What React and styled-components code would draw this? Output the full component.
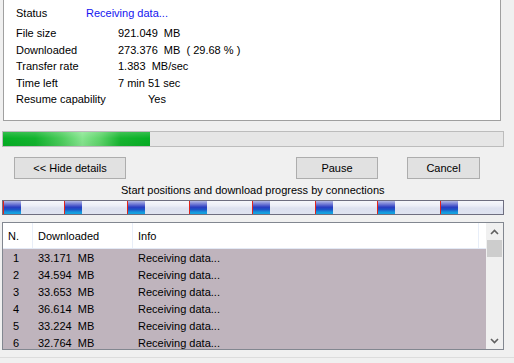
import React from "react";
import styled, { createGlobalStyle } from "styled-components";

const Global = createGlobalStyle`
  html, body { margin: 0; padding: 0; background: #f0f0f0; }
  body { font-family: "Liberation Sans", Arial, sans-serif; font-size: 11px; color: #000; }
`;

const Window = styled.div`
  width: 514px;
  height: 363px;
  overflow: hidden;
  background: #f0f0f0;
  display: flex;
  flex-direction: column;
`;

const InfoPanel = styled.div`
  box-sizing: border-box;
  margin-left: 3px;
  width: 498px;
  height: 121px;
  flex: none;
  background: #fff;
  border: 1px solid #a0a0a0;
  border-top: none;
  padding: 4px 0 0 12px;
`;

const StatusRow = styled.div`
  display: grid;
  grid-template-columns: 70px auto;
  height: 17px;
  align-items: center;
  margin-bottom: 4px;
`;

const DetailRow = styled.div`
  display: grid;
  grid-template-columns: 102px auto;
  height: 16.5px;
  align-items: center;
  white-space: pre;
`;

const Value = styled.span`
  color: ${(p) => (p.$blue ? "#1414f0" : "#000")};
  padding-left: ${(p) => p.$indent || 0}px;
  white-space: pre;
`;

const ProgressTrack = styled.div`
  box-sizing: border-box;
  margin: 10px 0 0 2px;
  width: 502px;
  height: 16px;
  flex: none;
  border: 1px solid #bcbcbc;
  background: #e6e6e6;
  display: flex;
`;

const ProgressFill = styled.div`
  height: 100%;
  background:
    linear-gradient(180deg, rgba(255,255,255,0.18) 0%, rgba(255,255,255,0) 45%, rgba(0,0,0,0.04) 100%),
    linear-gradient(90deg, #06b025 0%, #12b42e 22%, #4ccc5c 40%, #86e58f 54%, #5ed46a 66%, #16b52f 80%, #06b025 100%);
`;

const ButtonRow = styled.div`
  display: flex;
  align-items: center;
  margin-top: 10px;
  padding: 0 34px 0 14px;
  height: 22px;
  flex: none;
`;

const Spacer = styled.div`
  flex: 1;
`;

const Button = styled.button`
  box-sizing: border-box;
  height: 22px;
  width: ${(p) => p.$w}px;
  margin-left: ${(p) => p.$ml || 0}px;
  background: #e1e1e1;
  border: 1px solid #adadad;
  font-family: "Liberation Sans", Arial, sans-serif;
  font-size: 11px;
  color: #000;
  padding: 0;
`;

const Caption = styled.div`
  margin-top: 4px;
  height: 14px;
  line-height: 14px;
  padding-left: 121px;
  flex: none;
  white-space: nowrap;
`;

const ConnBar = styled.div`
  box-sizing: border-box;
  margin: 3px 0 0 2px;
  width: 502px;
  height: 15px;
  flex: none;
  border: 1px solid #6e6e80;
  display: flex;
`;

const ConnSegment = styled.div`
  width: ${(p) => p.$w}px;
  flex: none;
  display: flex;
  background: linear-gradient(180deg, #f6f7fb 0%, #eceef7 35%, #dde1ef 55%, #dfe3f0 100%);
`;

const ConnStart = styled.div`
  width: 1px;
  background: #e2231a;
`;

const ConnDone = styled.div`
  width: 17px;
  background: linear-gradient(180deg, #b4b9e6 0%, #6f78d4 25%, #2a3cc0 48%, #1d52c6 65%, #1696dc 85%, #12a6e2 100%);
`;

const Table = styled.div`
  box-sizing: border-box;
  margin: 7px 0 0 2px;
  width: 502px;
  height: 128px;
  flex: none;
  border: 1px solid #828790;
  display: flex;
  overflow: hidden;
`;

const ListArea = styled.div`
  flex: 1;
  display: flex;
  flex-direction: column;
  background: #bfb4bd;
`;

const HeaderRow = styled.div`
  display: grid;
  grid-template-columns: 30px 100px 346px 1fr;
  height: 26px;
  flex: none;
  background: #fff;
  border-bottom: 1px solid #e3e9f5;
  box-sizing: border-box;
`;

const HeaderCell = styled.div`
  display: flex;
  align-items: center;
  padding-left: 5px;
  border-right: ${(p) => (p.$last ? "none" : "1px solid #e8eef8")};
`;

const DataRow = styled.div`
  display: grid;
  grid-template-columns: 30px 100px 1fr;
  height: 17px;
  flex: none;
  align-items: center;
`;

const Cell = styled.div`
  padding-left: ${(p) => p.$pl || 5}px;
  white-space: pre;
`;

const ScrollBar = styled.div`
  width: 17px;
  flex: none;
  background: #f0f0f0;
  display: flex;
  flex-direction: column;
  align-items: center;
`;

const ArrowBox = styled.div`
  width: 17px;
  height: 17px;
  display: flex;
  align-items: center;
  justify-content: center;
  flex: none;
`;

const Thumb = styled.div`
  width: 15px;
  height: 17px;
  background: #cdcdcd;
  flex: none;
`;

const ScrollGap = styled.div`
  flex: 1;
`;

const Footer = styled.div`
  margin-top: 7px;
  border-top: 1px solid #dcdcdc;
  flex: 1;
`;

const Chevron = ({ up }) => (
  <svg width="9" height="6" viewBox="0 0 9 6">
    <path
      d={up ? "M1 5 L4.5 1.5 L8 5" : "M1 1 L4.5 4.5 L8 1"}
      fill="none"
      stroke="#606060"
      strokeWidth="1.6"
    />
  </svg>
);

const details = [
  ["File size", "921.049  MB"],
  ["Downloaded", "273.376  MB  ( 29.68 % )"],
  ["Transfer rate", "1.383  MB/sec"],
  ["Time left", "7 min 51 sec"],
  ["Resume capability", "Yes", 30],
];

const rows = [
  ["1", "33.171  MB"],
  ["2", "34.594  MB"],
  ["3", "33.653  MB"],
  ["4", "36.614  MB"],
  ["5", "33.224  MB"],
  ["6", "32.764  MB"],
];

const segments = [61, 63, 62, 63, 63, 62, 63, 63];

export default function App() {
  return (
    <>
      <Global />
      <Window>
        <InfoPanel>
          <StatusRow>
            <span>Status</span>
            <Value $blue>Receiving data...</Value>
          </StatusRow>
          {details.map(([k, v, ind]) => (
            <DetailRow key={k}>
              <span>{k}</span>
              <Value $indent={ind}>{v}</Value>
            </DetailRow>
          ))}
        </InfoPanel>

        <ProgressTrack>
          <ProgressFill style={{ width: "29.4%" }} />
        </ProgressTrack>

        <ButtonRow>
          <Button $w={112}>&lt;&lt; Hide details</Button>
          <Spacer />
          <Button $w={82}>Pause</Button>
          <Button $w={73} $ml={29}>Cancel</Button>
        </ButtonRow>

        <Caption>Start positions and download progress by connections</Caption>

        <ConnBar>
          {segments.map((w, i) => (
            <ConnSegment key={i} $w={w}>
              <ConnStart />
              <ConnDone />
            </ConnSegment>
          ))}
        </ConnBar>

        <Table>
          <ListArea>
            <HeaderRow>
              <HeaderCell>N.</HeaderCell>
              <HeaderCell>Downloaded</HeaderCell>
              <HeaderCell>Info</HeaderCell>
              <HeaderCell $last />
            </HeaderRow>
            {rows.map(([n, d]) => (
              <DataRow key={n}>
                <Cell $pl={10}>{n}</Cell>
                <Cell>{d}</Cell>
                <Cell>Receiving data...</Cell>
              </DataRow>
            ))}
          </ListArea>
          <ScrollBar>
            <ArrowBox>
              <Chevron up />
            </ArrowBox>
            <Thumb />
            <ScrollGap />
            <ArrowBox>
              <Chevron />
            </ArrowBox>
          </ScrollBar>
        </Table>

        <Footer />
      </Window>
    </>
  );
}
